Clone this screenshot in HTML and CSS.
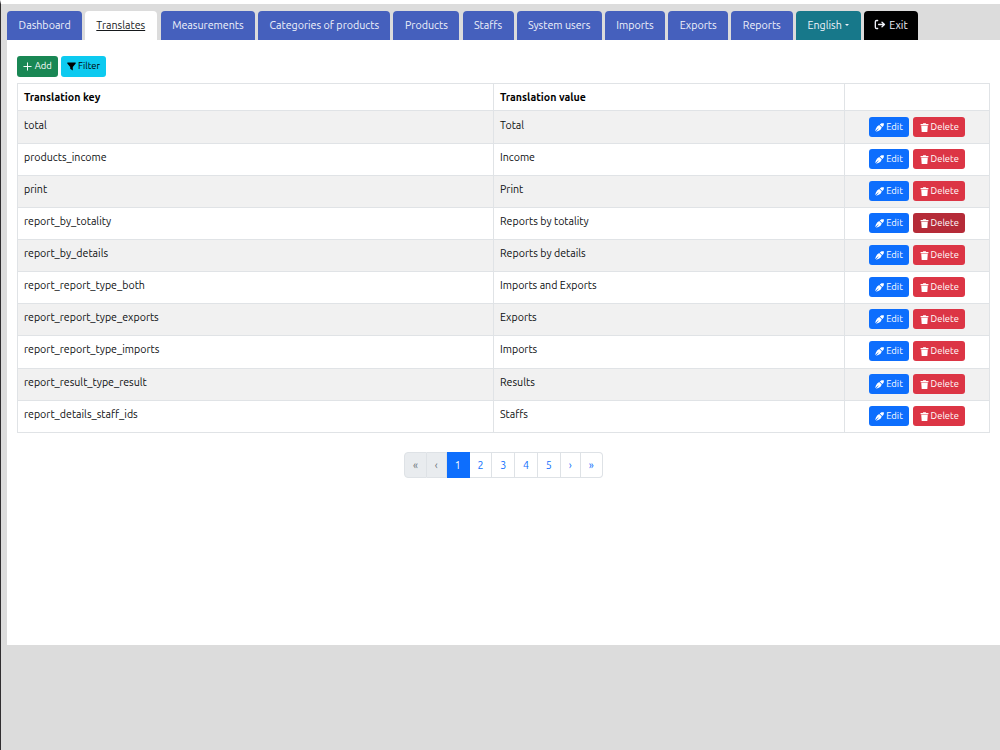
FILE: index.html
```
<!DOCTYPE html>
<html lang="en">
<head>
    <meta charset="UTF-8">
    <meta name="viewport" content="width=device-width, initial-scale=1.0">
    <title>Translates</title>
    <link rel="stylesheet" href="styles.css">
</head>
<body>
    <!-- Shared icons -->
    <svg class="icon-defs" aria-hidden="true">
        <symbol id="icon-plus" viewBox="0 0 16 16">
            <path d="M8 1.5v13M1.5 8h13" fill="none" stroke="currentColor" stroke-width="1.7" stroke-linecap="round"/>
        </symbol>
        <symbol id="icon-filter" viewBox="0 0 16 16">
            <path d="M0.5 2.5C0.2 1.7 0.7 1 1.5 1h13c0.8 0 1.3 0.7 1 1.5L10.3 8.8v6.1L5.7 12V8.8z" fill="currentColor"/>
        </symbol>
        <symbol id="icon-edit" viewBox="0 0 16 16">
            <path d="M8.4 2.600 11.500 0.600Q14 0 15.600 0.600Q16.200 3 14.800 5.300L13 7.200z M7.400 3.500 12.100 8.200 9.800 12Q6 14.500 1.600 15.500L6.500 10.400 5.700 9.600 0.400 14.800Q1 9.500 3.800 6z" fill="currentColor"/>
        </symbol>
        <symbol id="icon-trash" viewBox="0 0 16 16">
            <path d="M5.8 0.5h4.4l0.8 1.3h4v2.400H1V1.8H5zM2.200 5h11.600l-0.800 11H3z" fill="currentColor"/>
        </symbol>
        <symbol id="icon-exit" viewBox="0 0 18 16">
            <path d="M5.500 2H4Q2 2 2 4v8q0 2 2 2h1.500M7 8h8.500M12 4.500 15.700 8 12 11.500" fill="none" stroke="currentColor" stroke-width="2" stroke-linecap="round" stroke-linejoin="round"/>
        </symbol>
    </svg>

    <div class="page">
        <nav class="tabs" id="tabs">
            <a class="tab tab-dashboard">Dashboard</a>
            <a class="tab tab-translates active">Translates</a>
            <a class="tab tab-measurements">Measurements</a>
            <a class="tab tab-categories">Categories of products</a>
            <a class="tab tab-products">Products</a>
            <a class="tab tab-staffs">Staffs</a>
            <a class="tab tab-users">System users</a>
            <a class="tab tab-imports">Imports</a>
            <a class="tab tab-exports">Exports</a>
            <a class="tab tab-reports">Reports</a>
            <a class="tab tab-language">English<span class="caret"></span></a>
            <a class="tab tab-exit"><svg class="icon"><use href="#icon-exit"/></svg>Exit</a>
        </nav>

        <main class="content">
            <div class="toolbar">
                <button class="btn btn-add"><svg class="icon"><use href="#icon-plus"/></svg>Add</button>
                <button class="btn btn-filter"><svg class="icon"><use href="#icon-filter"/></svg>Filter</button>
            </div>

            <table class="table">
                <thead>
                    <tr>
                        <th class="col-key">Translation key</th>
                        <th class="col-value">Translation value</th>
                        <th></th>
                    </tr>
                </thead>
                <tbody id="translations"></tbody>
            </table>

            <ul class="pagination">
                <li class="page-item disabled">«</li>
                <li class="page-item prev disabled">‹</li>
                <li class="page-item active">1</li>
                <li class="page-item">2</li>
                <li class="page-item">3</li>
                <li class="page-item">4</li>
                <li class="page-item">5</li>
                <li class="page-item next">›</li>
                <li class="page-item">»</li>
            </ul>
        </main>
    </div>

    <script>
        const translations = [
            ['total', 'Total'],
            ['products_income', 'Income'],
            ['print', 'Print'],
            ['report_by_totality', 'Reports by totality'],
            ['report_by_details', 'Reports by details'],
            ['report_report_type_both', 'Imports and Exports'],
            ['report_report_type_exports', 'Exports'],
            ['report_report_type_imports', 'Imports'],
            ['report_result_type_result', 'Results'],
            ['report_details_staff_ids', 'Staffs']
        ];

        // Delete button shown in its pressed colour
        const focusedKey = 'report_by_totality';

        document.getElementById('translations').innerHTML = translations.map(([key, value]) => `
            <tr>
                <td><span class="text">${key}</span></td>
                <td><span class="text">${value}</span></td>
                <td>
                    <div class="actions">
                        <button class="btn btn-edit"><svg class="icon"><use href="#icon-edit"/></svg>Edit</button>
                        <button class="btn btn-delete${key === focusedKey ? ' focused' : ''}"><svg class="icon"><use href="#icon-trash"/></svg>Delete</button>
                    </div>
                </td>
            </tr>`).join('');
    </script>
</body>
</html>
```
FILE: styles.css
```
* {
    box-sizing: border-box;
}
body {
    font-family: Ubuntu, "Noto Sans", sans-serif;
    font-size: 10.65px;
    margin: 0;
    height: 750px;
    overflow: hidden;
    color: #0c0e10;
    background-color: #dcdcdc;
    border-top: 4px solid #fff;
    border-left: 1px solid #302e30;
}
.icon-defs {
    display: none;
}
.icon {
    flex: none;
    width: 9px;
    height: 9px;
}
.page {
    padding: 7px 0 0 6px;
}

/* Tabs */
.tabs {
    display: flex;
    justify-content: space-between;
    width: 911px;
    height: 29px;
    margin-left: 0.4px;
}
.tab {
    display: flex;
    align-items: center;
    justify-content: center;
    padding-bottom: 2px;
    border-radius: 4px 4px 0 0;
    background-color: #4560bd;
    color: #f1f3fb;
    font-size: 10.7px;
    white-space: nowrap;
    cursor: pointer;
}
.tab.active {
    margin-right: 1px;
    background-color: #fff;
    color: #16191c;
    text-decoration: underline;
}
.tab-dashboard { width: 74.5px; }
.tab-translates { width: 71.5px; }
.tab-measurements { width: 94.5px; }
.tab-categories { width: 132px; }
.tab-products { width: 66px; }
.tab-staffs { width: 51px; }
.tab-users { width: 85px; }
.tab-imports { width: 60.5px; }
.tab-exports { width: 59.5px; }
.tab-reports { width: 61.5px; }
.tab-language {
    width: 65px;
    background-color: #17788a;
}
.tab-exit {
    width: 54.5px;
    gap: 3px;
    background-color: #000;
}
.tab-exit .icon {
    width: 12px;
    height: 11px;
}
.caret {
    margin-left: 3px;
    border: 2.5px solid transparent;
    border-top-color: currentColor;
    border-bottom: 0;
}

/* Content */
.content {
    height: 605px;
    padding: 16px 10px 0;
    background-color: #fff;
}
.toolbar {
    display: flex;
    gap: 3.5px;
    margin-bottom: 6px;
}
.btn {
    display: flex;
    align-items: center;
    justify-content: center;
    gap: 2px;
    height: 20px;
    padding: 0 0 1px;
    border: none;
    border-radius: 3px;
    font-family: inherit;
    font-size: 9.4px;
    color: #fff;
    cursor: pointer;
}
.btn .icon {
    position: relative;
    top: 1px;
}
.btn-add {
    width: 40.5px;
    height: 20.5px;
    gap: 3px;
    background-color: #198754;
}
.btn-filter {
    width: 45px;
    height: 20.5px;
    background-color: #0dcaf0;
    color: #000;
}
.btn-edit {
    width: 40.5px;
    background-color: #0d6efd;
}
.btn-delete {
    width: 52px;
    background-color: #dc3545;
}
.btn-delete.focused {
    background-color: #b52b38;
}

/* Table */
.table {
    width: 973px;
    table-layout: fixed;
    border-collapse: collapse;
}
.table th,
.table td {
    padding: 0 6px;
    border: 1px solid #e0e3e6;
    text-align: left;
}
.table th {
    height: 27px;
    color: #000;
}
.table td {
    height: 32px;
    vertical-align: top;
}
.table tbody tr:first-child td,
.table tbody tr:nth-child(8) td {
    height: 33px;
}
.table tbody tr:first-child td {
    padding-top: 1px;
}
.table tbody tr:nth-child(odd) {
    background-color: #f1f1f1;
}
.table .text {
    display: block;
    padding-top: 5px;
    line-height: 16px;
}
.col-key {
    width: 476px;
}
.col-value {
    width: 351px;
}
.actions {
    display: flex;
    justify-content: center;
    gap: 4px;
    padding-top: 5px;
}

/* Pagination */
.pagination {
    display: flex;
    justify-content: center;
    margin: 19px 0 0;
    padding: 0;
    list-style: none;
}
.page-item {
    display: flex;
    align-items: center;
    justify-content: center;
    width: 22.8px;
    height: 26px;
    border: 1px solid #dee2e6;
    border-left-width: 0;
    color: #0d6efd;
    cursor: pointer;
}
.page-item:first-child {
    width: 22.5px;
    border-left-width: 1px;
    border-radius: 4px 0 0 4px;
}
.page-item:last-child {
    width: 22px;
    border-radius: 0 4px 4px 0;
}
.page-item.prev,
.page-item.next {
    width: 20px;
}
.page-item.disabled {
    background-color: #e9ecef;
    color: #6c757d;
}
.page-item.active {
    background-color: #0d6efd;
    border-color: #0d6efd;
    color: #fff;
}
```
